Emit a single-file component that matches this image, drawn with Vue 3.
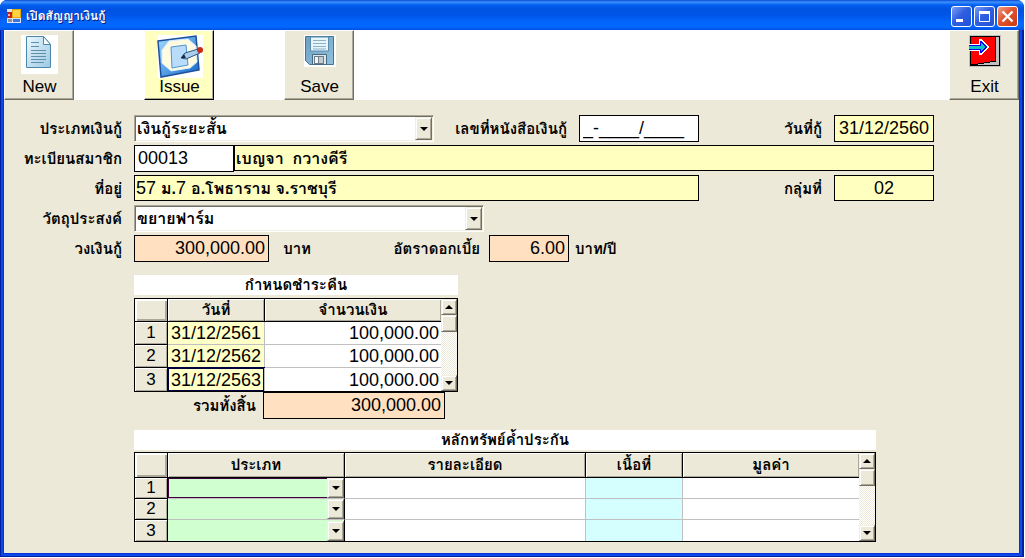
<script setup>
import { ref } from 'vue'

const loanType = ref('เงินกู้ระยะสั้น')
const purpose = ref('ขยายฟาร์ม')
const contractNo = ref('_-____/____')
const memberNo = ref('00013')
const payments = [
  { date: '31/12/2561', amount: '100,000.00' },
  { date: '31/12/2562', amount: '100,000.00' },
  { date: '31/12/2563', amount: '100,000.00' },
]
</script>

<template>
  <div class="window">
    <header class="titlebar">
      <svg class="app-icon" width="14" height="14" viewBox="0 0 14 14" shape-rendering="crispEdges" aria-hidden="true">
        <rect width="14" height="14" fill="#dfe3f0" />
        <rect x="0" y="3" width="5" height="6" fill="#c62316" />
        <rect x="1" y="5" width="2" height="2" fill="#f4b0a0" />
        <rect x="5" y="0" width="9" height="9" fill="#e8a808" />
        <rect x="6" y="1" width="7" height="7" fill="#ffd24a" />
        <rect x="1" y="10" width="4" height="3" fill="#8a90a8" />
        <rect x="6" y="10" width="7" height="3" fill="#3c74d8" />
      </svg>
      <h1>เปิดสัญญาเงินกู้</h1>
      <div class="controls">
        <button type="button" aria-label="Minimize">
          <svg width="21" height="21" viewBox="0 0 21 21"><path d="M5 14.500h7" stroke="#fff" stroke-width="3" /></svg>
        </button>
        <button type="button" aria-label="Maximize">
          <svg width="21" height="21" viewBox="0 0 21 21" fill="none" stroke="#fff"><path d="M5.500 6v9.500h10V6" /><path d="M5 6.500h11" stroke-width="3" /></svg>
        </button>
        <button type="button" class="close" aria-label="Close">
          <svg width="21" height="21" viewBox="0 0 21 21"><path d="M5.500 5.500l10 10M15.500 5.500l-10 10" stroke="#fff" stroke-width="2.400" /></svg>
        </button>
      </div>
    </header>

    <main class="client">
      <nav class="toolbar">
        <button type="button" class="tool">
          <svg width="37" height="39" viewBox="0 0 37 39" aria-hidden="true">
            <defs><linearGradient id="page" x1="0" y1="0" x2="1" y2="1"><stop offset="0" stop-color="#eaf8ff" /><stop offset="1" stop-color="#9cc9e2" /></linearGradient></defs>
            <rect width="37" height="39" fill="#fff" />
            <path d="M5.500 1.500h17l7 8v23h-24z" fill="url(#page)" stroke="#4d86a8" />
            <path d="M22.500 1.500v8h7z" fill="#f4fcff" stroke="#4d86a8" />
            <path d="M10 7.500h8M10 11.500h8M10 15.500h15M10 18.500h15M10 21.500h15M10 24.500h15M10 27.500h13" stroke="#5f8faa" />
          </svg>
          <span>New</span>
        </button>
        <button type="button" class="tool active">
          <svg width="46" height="43" viewBox="0 0 46 43" aria-hidden="true">
            <defs><linearGradient id="board" x1="0" y1="0" x2="1" y2="1"><stop offset="0" stop-color="#a4dcff" /><stop offset="1" stop-color="#0f66c8" /></linearGradient></defs>
            <rect width="46" height="43" fill="#fff" />
            <path d="M1 6L39 1l3 34L4 42z" fill="url(#board)" stroke="#1d4f9c" stroke-width="1.500" />
            <path d="M12 6l19-2 8 7 1 16-7 6-19 3-9-8V15z" fill="#fffbe0" stroke="#d9efff" />
            <path d="M14 12l15-2 2 20-16 3z" fill="#b9dcfa" stroke="#4f94d2" />
            <path d="M24 23l4-5 13-4 2 4-14 6z" fill="#a9cdec" stroke="#31567d" />
            <path d="M24 23l3-4 2 4z" fill="#192d48" />
            <circle cx="43" cy="15" r="3" fill="#c92a14" />
          </svg>
          <span>Issue</span>
        </button>
        <button type="button" class="tool">
          <svg width="32" height="32" viewBox="0 0 32 32" aria-hidden="true">
            <defs><linearGradient id="disk" x1="0" y1="0" x2="1" y2="1"><stop offset="0" stop-color="#6f9fc0" /><stop offset="1" stop-color="#8fc0dc" /></linearGradient></defs>
            <rect width="32" height="32" fill="#fff" />
            <path d="M1.500 1.500h28v28h-24l-4-4z" fill="url(#disk)" stroke="#477393" />
            <path d="M6.500 2h18v14h-18z" fill="#e4f6fc" stroke="#5b8cab" />
            <path d="M9 5.500h13M9 8.500h13M9 11.500h13M9 14h13" stroke="#8fb1c3" />
            <path d="M8.500 19.500h14v10h-14z" fill="#dfe7ea" stroke="#456a84" />
            <rect x="10" y="21" width="10" height="8" fill="#6d7c86" /><rect x="11" y="22" width="3" height="6" fill="#f4f7f8" /><rect x="15" y="22" width="4" height="6" fill="#c3ccd0" />
          </svg>
          <span>Save</span>
        </button>
        <button type="button" class="tool exit">
          <svg width="32" height="32" viewBox="0 0 32 32" shape-rendering="crispEdges" aria-hidden="true">
            <rect width="32" height="32" fill="#c0c0c0" />
            <rect x="1" y="1" width="30" height="30" fill="#000" />
            <path d="M27 2h3v28H9v-1h6v-1h6v-1h6z" fill="#c0c0c0" />
            <path d="M2 2h24v24h-5v1h-6v1H9v1H2z" fill="#f00" />
            <path d="M0 9h10V4h2l8 8-8 8h-2v-4H0z" fill="#fff" />
            <path d="M0 10h11V6h1l7 6-7 6h-1v-3H0z" fill="#0000ff" />
            <path d="M0 11h12V8l5 4-5 4v-2H0z" fill="#10c0c0" />
          </svg>
          <span>Exit</span>
        </button>
      </nav>

      <form class="form" @submit.prevent>
        <div class="row">
          <label class="lead" for="loan-type">ประเภทเงินกู้</label>
          <span class="combo grow">
            <select id="loan-type" v-model="loanType"><option>เงินกู้ระยะสั้น</option></select>
            <i class="drop" />
          </span>
          <label class="mid" for="contract">เลขที่หนังสือเงินกู้</label>
          <input id="contract" v-model="contractNo" class="w120">
          <label class="side" for="loan-date">วันที่กู้</label>
          <input id="loan-date" class="w100 yellow center" value="31/12/2560" readonly>
        </div>
        <div class="row">
          <label class="lead" for="member">ทะเบียนสมาชิก</label>
          <input id="member" v-model="memberNo" class="w100">
          <input class="grow yellow thai short" value="เบญจา  กวางคีรี" aria-label="ชื่อสมาชิก" readonly>
        </div>
        <div class="row">
          <label class="lead" for="address">ที่อยู่</label>
          <output id="address" class="grow yellow thai short"><span class="num">57 </span>ม.<span class="num">7 </span>อ.โพธาราม จ.ราชบุรี</output>
          <label class="side" for="group">กลุ่มที่</label>
          <input id="group" class="w100 yellow center short" value="02" readonly>
        </div>
        <div class="row">
          <label class="lead" for="purpose">วัตถุประสงค์</label>
          <span class="combo w350">
            <select id="purpose" v-model="purpose"><option>ขยายฟาร์ม</option></select>
            <i class="drop" />
          </span>
        </div>
        <div class="row">
          <label class="lead" for="limit">วงเงินกู้</label>
          <input id="limit" class="w135 peach right" value="300,000.00" readonly>
          <span class="unit">บาท</span>
          <label class="rate" for="rate">อัตราดอกเบี้ย</label>
          <input id="rate" class="w80 peach right" value="6.00" readonly>
          <span class="unit-near">บาท/ปี</span>
        </div>
      </form>

      <section class="panel schedule">
        <h2>กำหนดชำระคืน</h2>
        <div class="grid">
          <table>
            <colgroup><col class="c-no"><col class="c-date"><col></colgroup>
            <thead><tr><th /><th>วันที่</th><th>จำนวนเงิน</th></tr></thead>
            <tbody>
              <tr v-for="(p, i) in payments" :key="p.date">
                <th>{{ i + 1 }}</th>
                <td class="date" :class="{ current: i === 2 }">{{ p.date }}</td>
                <td class="amount">{{ p.amount }}</td>
              </tr>
            </tbody>
          </table>
          <div class="scroll">
            <button type="button" class="up" aria-label="Scroll up" />
            <i class="thumb" />
            <button type="button" class="down" aria-label="Scroll down" />
          </div>
        </div>
        <div class="total">
          <label for="total">รวมทั้งสิ้น</label>
          <input id="total" class="peach right" value="300,000.00" readonly>
        </div>
      </section>

      <section class="panel collateral">
        <h2>หลักทรัพย์ค้ำประกัน</h2>
        <div class="grid">
          <table>
            <colgroup><col class="c-no"><col class="c-type"><col><col class="c-area"><col class="c-value"></colgroup>
            <thead><tr><th /><th>ประเภท</th><th>รายละเอียด</th><th>เนื้อที่</th><th>มูลค่า</th></tr></thead>
            <tbody>
              <tr v-for="n in 3" :key="n">
                <th>{{ n }}</th>
                <td class="type" :class="{ current: n === 1 }">
                  <span class="cell-combo"><select :aria-label="'ประเภท ' + n"><option /></select><i class="drop" /></span>
                </td>
                <td /><td class="area" /><td />
              </tr>
            </tbody>
          </table>
          <div class="scroll">
            <button type="button" class="up" aria-label="Scroll up" />
            <i class="thumb" />
            <button type="button" class="down" aria-label="Scroll down" />
          </div>
        </div>
      </section>
    </main>
  </div>
</template>

<style>
body { background: #fff; }
</style>

<style scoped>
* { box-sizing: border-box; }
.window {
  min-height: calc(100vh - 1px);
  margin-right: 1px;
  display: flex;
  flex-direction: column;
  border-radius: 7px 7px 0 0;
  background: #0a3fdc;
  font-family: "Liberation Sans", "Loma", "Noto Sans Thai", sans-serif;
  font-size: 18px;
  color: #000;
  overflow: hidden;
}
button, input, select { font: inherit; color: inherit; padding: 0; margin: 0; border-radius: 0; }
.titlebar {
  position: relative;
  z-index: 1;
  height: 30px;
  flex: none;
  display: flex;
  align-items: center;
  padding: 2px 6px 0 7px;
  background: linear-gradient(#0a48d0 0, #3b92ff 2px, #0360f0 5px, #0053e1 9px, #0055e8 15px, #0366fc 22px, #0267ff 27px, #0050dd 30px);
}
.titlebar h1 {
  flex: 1;
  margin: 0 0 0 5px;
  font-size: 12px;
  line-height: 20px;
  font-weight: bold;
  color: #fff;
  text-shadow: 1px 1px #0a1883;
}
.controls { display: flex; gap: 2px; }
.controls button {
  width: 21px;
  height: 21px;
  border: 1px solid #fff;
  border-radius: 3px;
  background: linear-gradient(135deg, #7c9df5, #2f5fe0 45%, #2151d8);
  overflow: hidden;
}
.controls svg { display: block; margin: -1px; }
.controls .close { background: linear-gradient(135deg, #f0a088, #e0532f 45%, #c83a10); }
.client {
  flex: 1;
  margin: 0 5px 4px 4px;
  padding-bottom: 11px;
  background: #ece9d8;
  box-shadow: 0 0 0 1px #0831d9, 0 0 0 3px #0a4ae8, 0 0 0 5px #001ea0;
}
.toolbar { display: flex; gap: 70px; height: 70px; background: #fff; }
.tool {
  width: 70px;
  height: 70px;
  display: flex;
  flex-direction: column;
  align-items: center;
  justify-content: space-between;
  padding: 4px 0 1px 1px;
  background: #ece9d8;
  border: 1px solid;
  border-color: #fff #716f64 #716f64 #fff;
  box-shadow: inset -1px -1px #aca899;
  font-size: 17px;
  line-height: 22px;
}
.tool svg { flex: none; margin-bottom: -4px; }
.tool.active { background: #ffffc0; border-color: #fff #000 #000 #fff; }
.exit { margin-left: auto; }

.form { display: flex; flex-direction: column; gap: 3px; padding: 15px 85px 0 0; }
.row { display: flex; height: 27px; }
label, .unit, .unit-near { font-size: 15px; font-weight: bold; line-height: 27px; white-space: nowrap; text-align: right; }
.lead { width: 118px; margin-right: 12px; }
.mid { width: 133px; margin-right: 12px; }
.side { width: 123px; margin-right: 12px; }
.rate { width: 169px; margin-right: 9px; }
.unit { width: 28px; margin-left: 14px; }
.unit-near { margin-left: 6px; }
input { height: 27px; min-width: 0; border: 1px solid #000; padding: 0 3px; background: #fff; outline: none; }
.w80 { width: 80px; }
.w100 { width: 100px; }
.w120 { width: 120px; }
.w135 { width: 135px; }
.w350 { width: 350px; }
.grow { flex: 1; }
.short { height: 26px; }
.yellow { background: #ffffc0; }
.peach { background: #ffe0c0; }
.center { text-align: center; }
.right { text-align: right; }
.thai { padding: 0 1px; font-size: 16px; font-weight: bold; }
output { border: 1px solid #000; line-height: 24px; white-space: pre; overflow: hidden; }
.num { font-size: 18px; font-weight: normal; }
.combo, .cell-combo { position: relative; display: block; }
.combo {
  border: 1px solid;
  border-color: #aca899 #fff #fff #aca899;
  box-shadow: inset 1px 1px #716f64, inset -1px -1px #f1efe2;
  background: #fff;
}
select { display: block; width: 100%; height: 100%; border: 0; background: transparent; appearance: none; outline: none; }
.combo select { padding: 0 20px 0 2px; font-size: 16px; line-height: 25px; font-weight: bold; }
.drop {
  position: absolute;
  top: 1px;
  right: 1px;
  bottom: 1px;
  width: 17px;
  pointer-events: none;
}
.drop, .scroll button, .thumb {
  display: grid;
  place-items: center;
  background: #ece9d8;
  border: 1px solid;
  border-color: #f1efe2 #716f64 #716f64 #f1efe2;
  box-shadow: inset 1px 1px #fff, inset -1px -1px #aca899;
}
.drop::after, .down::after, .up::after {
  content: "";
  border: solid transparent;
  border-width: 4px 4px 0;
  border-top-color: #000;
}
.up::after { border-width: 0 4px 4px; border-bottom-color: #000; }

.panel { margin-left: 130px; }
.panel h2 { margin: 0; height: 20px; background: #fff; font-size: 15px; line-height: 20px; font-weight: bold; text-align: center; }
.schedule { width: 324px; margin-top: 13px; }
.collateral { margin-top: 11px; margin-right: 143px; }
.grid { display: flex; margin-top: 3px; border: 1px solid #000; }
.collateral .grid { margin-top: 2px; }
table { flex: 1; width: 0; table-layout: fixed; border-collapse: separate; border-spacing: 0; }
.c-no { width: 33px; }
.c-date { width: 97px; }
.c-type { width: 177px; }
.c-area { width: 97px; }
.c-value { width: 176px; }
th, td { padding: 0; height: 23px; line-height: 20px; border: solid #c0c0c0; border-width: 0 1px 1px 0; background: #fff; white-space: nowrap; }
th { background: #ece9d8; border-color: #000; box-shadow: inset 1px 1px #fff, inset -1px -1px #aca899; font-weight: normal; font-size: 17px; }
thead th { font-size: 15px; font-weight: bold; }
thead th:first-child { box-shadow: inset 2px 2px #fff, inset -2px -2px #aca899; }
tr > :last-child { border-right: 0; }
tbody tr:last-child > * { border-bottom: 0; }
.date { background: #ffffc8; text-align: center; }
.amount { text-align: right; padding-right: 2px; }
.current { box-shadow: inset 0 0 0 1px #000040, 0 -1px #000040; }
.collateral th, .collateral td { height: 21px; line-height: 18px; }
.collateral thead th { height: 25px; }
.type { background: #d0ffd0; border-right-color: #000; }
.area { background: #d5ffff; }
.cell-combo { height: 20px; }
.cell-combo .drop { top: 0; right: 0; bottom: 0; }
.type.current { box-shadow: inset 0 0 0 1px #400040, 0 1px #400040; }
.scroll {
  width: 16px;
  display: flex;
  flex-direction: column;
  background: repeating-conic-gradient(#fff 0 25%, #ece9d8 0 50%) 0 0 / 2px 2px;
}
.scroll button { height: 16px; flex: none; }
.thumb { height: 17px; flex: none; }
.down { margin-top: auto; }
.total { display: flex; }
.total label { width: 122px; margin-right: 7px; }
.total input { width: 182px; }
</style>
